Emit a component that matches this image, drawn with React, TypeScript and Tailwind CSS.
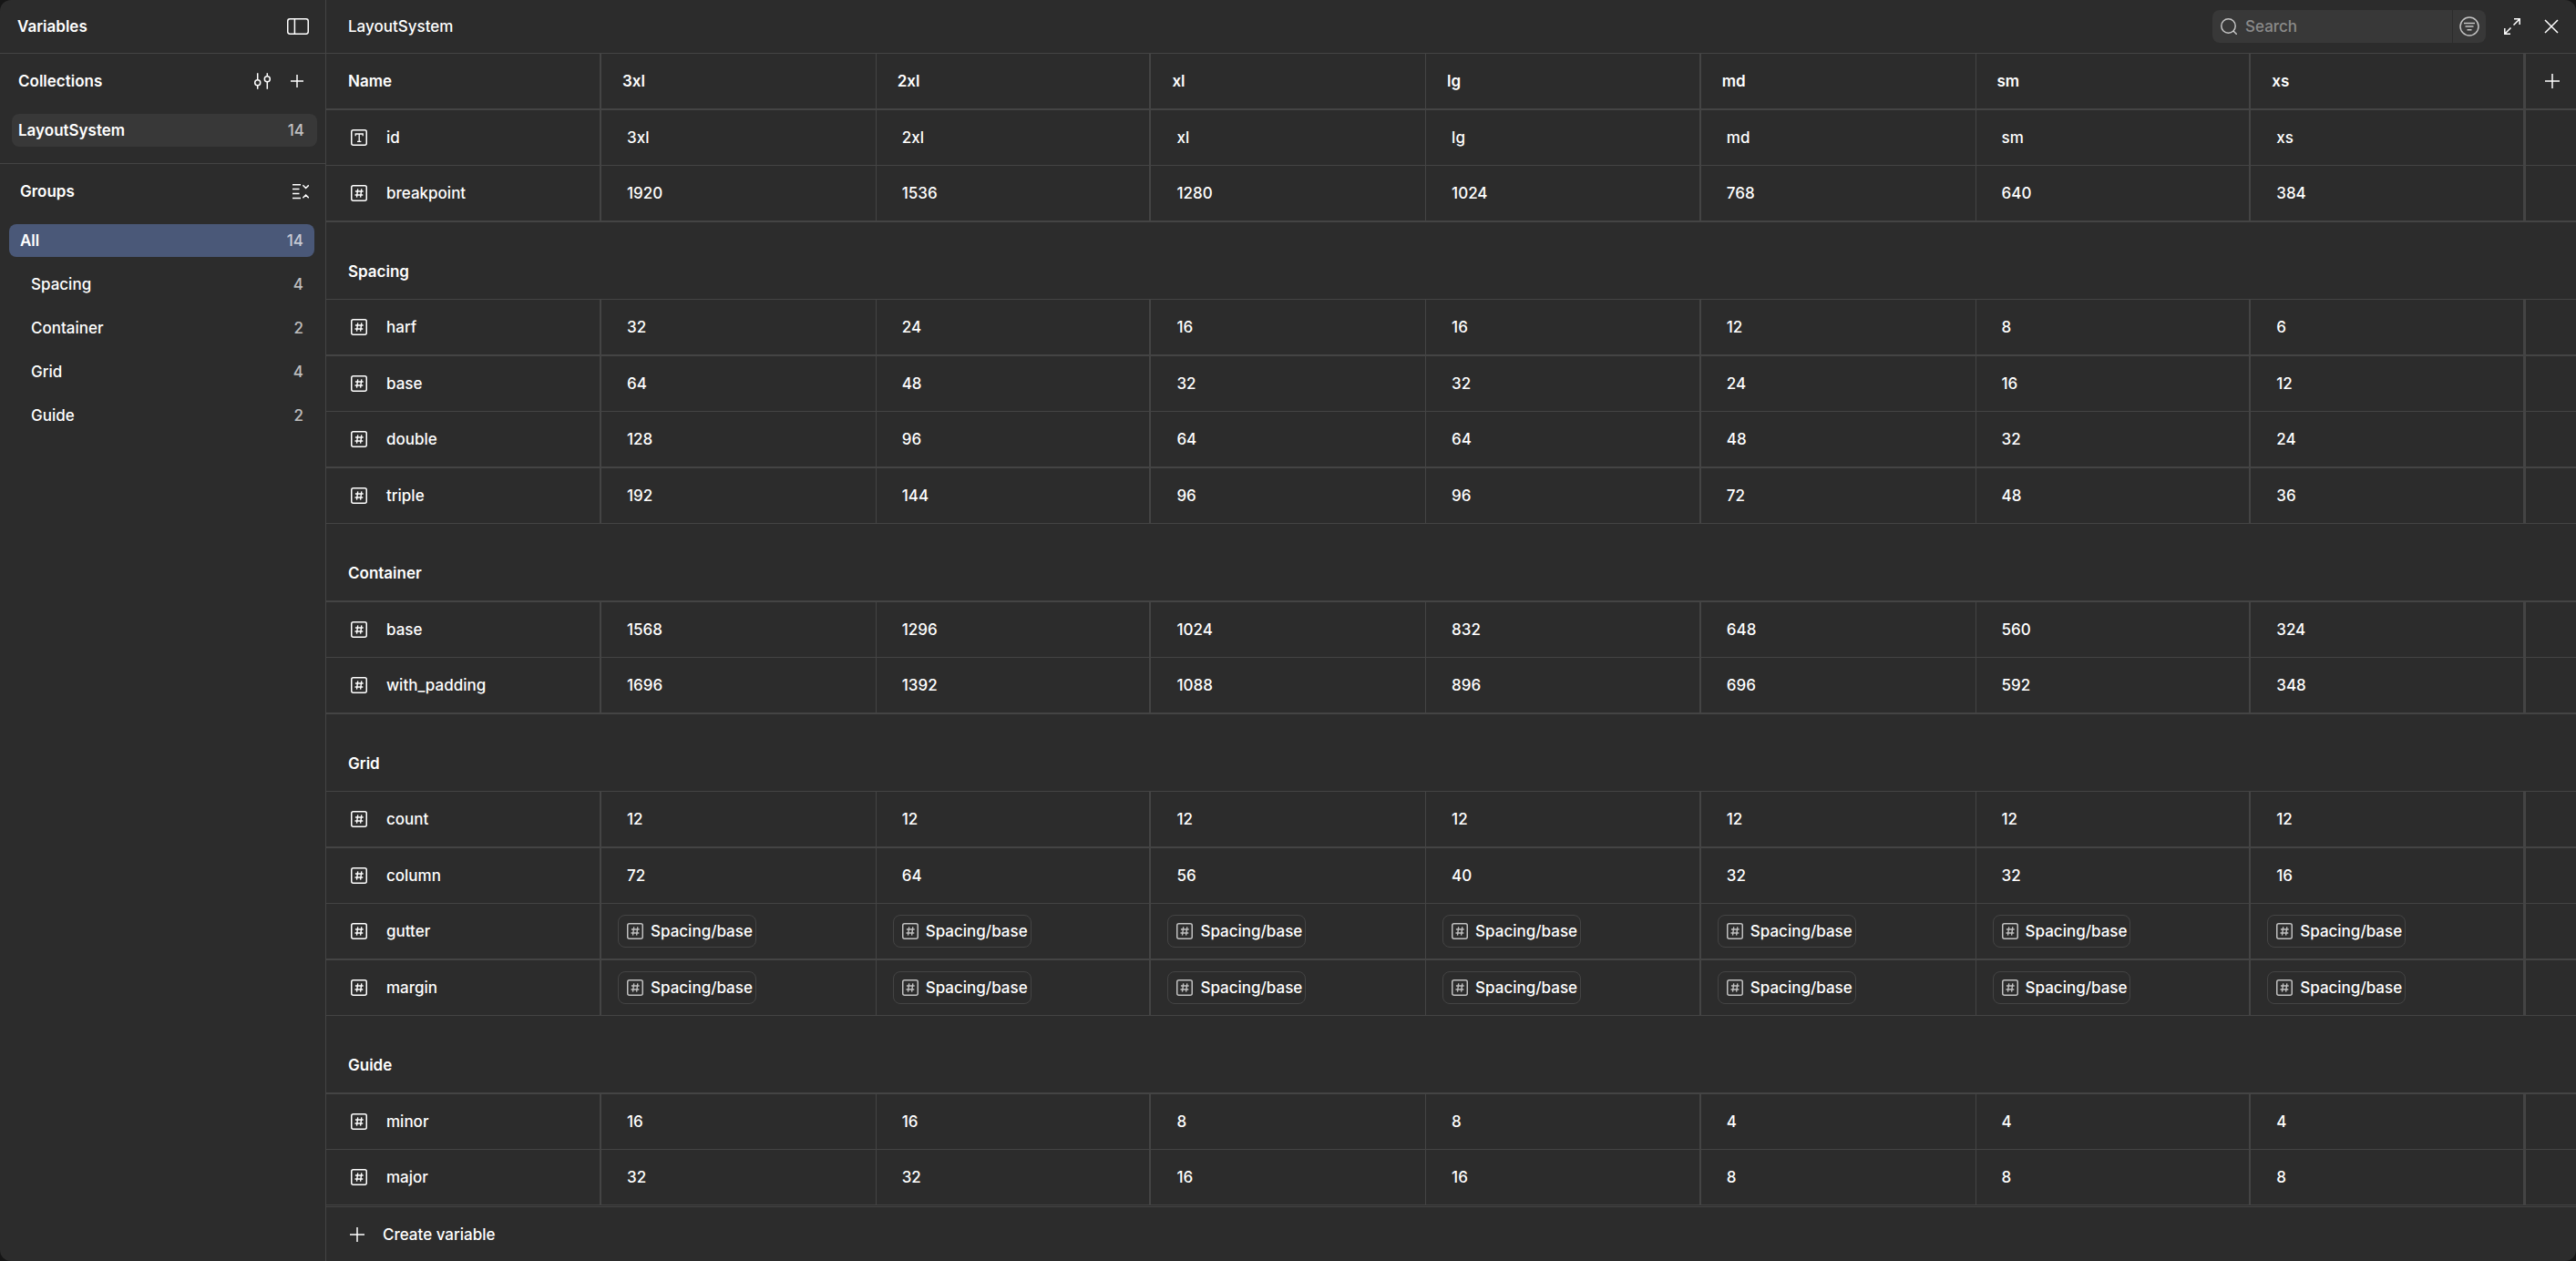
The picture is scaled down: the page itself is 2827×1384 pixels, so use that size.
import type { ReactNode } from 'react'

const MODES = ['3xl', '2xl', 'xl', 'lg', 'md', 'sm', 'xs']

interface Variable {
  name: string
  type?: 'string' | 'number'
  values?: (string | number)[]
  alias?: string
  thin?: boolean
}

interface VariableGroup {
  name: string
  thin?: boolean
  variables: Variable[]
}

const ROOT_VARIABLES: Variable[] = [
  { name: 'id', type: 'string', values: MODES, thin: true },
  { name: 'breakpoint', values: [1920, 1536, 1280, 1024, 768, 640, 384] },
]

const GROUPS: VariableGroup[] = [
  {
    name: 'Spacing',
    thin: true,
    variables: [
      { name: 'harf', values: [32, 24, 16, 16, 12, 8, 6] },
      { name: 'base', values: [64, 48, 32, 32, 24, 16, 12], thin: true },
      { name: 'double', values: [128, 96, 64, 64, 48, 32, 24] },
      { name: 'triple', values: [192, 144, 96, 96, 72, 48, 36], thin: true },
    ],
  },
  {
    name: 'Container',
    variables: [
      { name: 'base', values: [1568, 1296, 1024, 832, 648, 560, 324], thin: true },
      { name: 'with_padding', values: [1696, 1392, 1088, 896, 696, 592, 348] },
    ],
  },
  {
    name: 'Grid',
    thin: true,
    variables: [
      { name: 'count', values: [12, 12, 12, 12, 12, 12, 12] },
      { name: 'column', values: [72, 64, 56, 40, 32, 32, 16], thin: true },
      { name: 'gutter', alias: 'Spacing/base' },
      { name: 'margin', alias: 'Spacing/base', thin: true },
    ],
  },
  {
    name: 'Guide',
    variables: [
      { name: 'minor', values: [16, 16, 8, 8, 4, 4, 4], thin: true },
      { name: 'major', values: [32, 32, 16, 16, 8, 8, 8], thin: true },
    ],
  },
]

function Icon({ size = 18, children }: { size?: number; children: ReactNode }) {
  return (
    <svg
      width={size}
      height={size}
      viewBox={`0 0 ${size} ${size}`}
      fill="none"
      stroke="currentColor"
      strokeWidth={1.5}
      className="shrink-0"
      aria-hidden="true"
    >
      {children}
    </svg>
  )
}

function NumberIcon() {
  return (
    <Icon>
      <rect x="0.75" y="0.75" width="16.5" height="16.5" rx="2" />
      <path d="M7.7 4.4L6.5 13.6M11.8 4.4L10.6 13.6M4.9 7H13.7M4.5 11H13.3" strokeWidth={1.4} />
    </Icon>
  )
}

function StringIcon() {
  return (
    <Icon>
      <rect x="0.75" y="0.75" width="16.5" height="16.5" rx="2" />
      <path d="M5.2 7.2V5H13.2V7.2M9.2 5V13.3M7 13.3H11.4" strokeWidth={1.3} />
    </Icon>
  )
}

function PlusIcon({ size = 16 }: { size?: 14 | 16 }) {
  const middle = size / 2
  return (
    <Icon size={size}>
      <path d={`M${middle} 0V${size}M0 ${middle}H${size}`} />
    </Icon>
  )
}

function PanelIcon() {
  return (
    <Icon size={24}>
      <rect x="0.75" y="3.75" width="22.5" height="16.5" rx="2.4" />
      <path d="M8.4 4V20" />
    </Icon>
  )
}

function SettingsIcon() {
  return (
    <Icon>
      <circle cx="3.7" cy="10.8" r="3" />
      <circle cx="14.3" cy="6.7" r="3" />
      <path d="M3.7 0.3V7.8M3.7 13.8V17.7M14.3 0.3V3.7M14.3 9.7V17.7" />
    </Icon>
  )
}

function CollapseIcon() {
  return (
    <Icon>
      <path d="M0 1.7H9M0 6.6H7.5M0 11.6H7.5M0 16.4H9M11.4 2.3L14.6 5.5L17.8 2.3M11.4 16.2L14.6 13L17.8 16.2" />
    </Icon>
  )
}

function SearchIcon() {
  return (
    <Icon>
      <circle cx="8.5" cy="8.5" r="7.7" />
      <path d="M14 14L17.8 17.8" />
    </Icon>
  )
}

function FilterIcon() {
  return (
    <Icon size={22}>
      <circle cx="11" cy="11" r="10" />
      <path d="M5 7.5H17M6.5 11H15.5M8.5 14.7H13.5" />
    </Icon>
  )
}

function ExpandIcon() {
  return (
    <Icon>
      <path d="M11 0.8H17.2V7M17 1L10.5 7.5M0.8 11V17.2H7M1 17L7.5 10.5" />
    </Icon>
  )
}

function CloseIcon() {
  return (
    <Icon size={16}>
      <path d="M1 1L15 15M15 1L1 15" />
    </Icon>
  )
}

function IconButton({ label, children }: { label: string; children: ReactNode }) {
  return (
    <button type="button" aria-label={label} className="flex items-center justify-center">
      {children}
    </button>
  )
}

function GroupLink({ name, count }: { name: string; count: number }) {
  return (
    <li>
      <a href="#" className="flex h-9 items-center justify-between pl-6 pr-3">
        <span>{name}</span>
        <span className="text-white/70">{count}</span>
      </a>
    </li>
  )
}

function Sidebar() {
  return (
    <aside className="flex w-[358px] shrink-0 flex-col border-r border-[#444444]">
      <header className="flex h-[59px] items-center justify-between border-b border-[#444444] pl-[19px] pr-[18px]">
        <h1 className="font-semibold">Variables</h1>
        <IconButton label="Toggle sidebar">
          <PanelIcon />
        </IconButton>
      </header>

      <section className="h-[121px] border-b border-[#444444] pl-[13px] pr-[9px]">
        <div className="flex h-[60px] items-center justify-between pl-[7px] pr-[15px]">
          <h2 className="font-semibold">Collections</h2>
          <div className="flex items-center gap-[22px]">
            <IconButton label="Collection settings">
              <SettingsIcon />
            </IconButton>
            <IconButton label="Create collection">
              <PlusIcon size={14} />
            </IconButton>
          </div>
        </div>
        <a
          href="#"
          className="mt-1.5 flex h-9 items-center justify-between rounded-lg bg-[#383838] pl-[7px] pr-3.5"
        >
          <span className="font-semibold">LayoutSystem</span>
          <span className="text-white/70">14</span>
        </a>
      </section>

      <section className="pl-2.5 pr-3">
        <div className="flex h-[60px] items-center justify-between pl-3 pr-1.5">
          <h2 className="font-semibold">Groups</h2>
          <IconButton label="Collapse groups">
            <CollapseIcon />
          </IconButton>
        </div>
        <ul className="mt-1.5 flex flex-col gap-3">
          <li>
            <a
              href="#"
              aria-current="true"
              className="flex h-9 items-center justify-between rounded-lg bg-[#4a5878] px-3"
            >
              <span className="font-semibold">All</span>
              <span className="text-white/70">14</span>
            </a>
          </li>
          {GROUPS.map((group) => (
            <GroupLink key={group.name} name={group.name} count={group.variables.length} />
          ))}
        </ul>
      </section>
    </aside>
  )
}

function Toolbar() {
  return (
    <header className="flex h-[59px] items-center justify-between border-b border-[#444444] pl-6 pr-[19px]">
      <h2>LayoutSystem</h2>
      <div className="flex items-center">
        <div className="flex h-9 gap-px">
          <label className="flex w-[263px] items-center gap-[9px] rounded-l-lg bg-[#383838] pl-[9px] text-white/70">
            <SearchIcon />
            <input
              type="search"
              placeholder="Search"
              aria-label="Search"
              className="w-full min-w-0 bg-transparent outline-none placeholder:text-[#8a8a8a]"
            />
          </label>
          <button
            type="button"
            aria-label="Filter"
            className="flex w-9 items-center justify-center rounded-r-lg bg-[#383838] text-white/70"
          >
            <FilterIcon />
          </button>
        </div>
        <div className="ml-5 flex items-center gap-[26px]">
          <IconButton label="Expand">
            <ExpandIcon />
          </IconButton>
          <IconButton label="Close">
            <CloseIcon />
          </IconButton>
        </div>
      </div>
    </header>
  )
}

function AliasChip({ name }: { name: string }) {
  return (
    <button
      type="button"
      className="flex h-9 items-center gap-2 rounded-lg border border-[#444444] pl-[9px] pr-[3px]"
    >
      <span className="text-white/70">
        <NumberIcon />
      </span>
      {name}
    </button>
  )
}

function VariableRow({ variable }: { variable: Variable }) {
  const line = variable.thin ? 'h-[61px] border-b' : 'h-[62px] border-b-2'

  return (
    <tr>
      <th
        scope="row"
        className={`${line} border-r-2 border-[#444444] p-0 pl-[27px] text-left font-[450]`}
      >
        <div className="flex items-center gap-[21px]">
          {variable.type === 'string' ? <StringIcon /> : <NumberIcon />}
          {variable.name}
        </div>
      </th>
      {MODES.map((mode, i) => (
        <td
          key={mode}
          className={`${line} border-[#444444] p-0 pl-[18px] odd:border-r-2 even:border-r nth-[8]:border-r-3`}
        >
          {variable.alias ? (
            <AliasChip name={variable.alias} />
          ) : (
            <span className="pl-2.5">{variable.values?.[i]}</span>
          )}
        </td>
      ))}
      <td className={`${line} border-[#444444] p-0`} />
    </tr>
  )
}

function GroupHeading({ name, thin }: { name: string; thin?: boolean }) {
  return (
    <tr>
      <th
        scope="rowgroup"
        colSpan={MODES.length + 2}
        className={`${thin ? 'h-[85px] border-b' : 'h-[86px] border-b-2'} border-[#444444] p-0 pl-6 pt-6 text-left font-semibold`}
      >
        {name}
      </th>
    </tr>
  )
}

function VariablesTable() {
  return (
    <table className="w-full table-fixed border-separate border-spacing-0">
      <colgroup>
        <col className="w-[302px]" />
        {MODES.map((mode) => (
          <col key={mode} />
        ))}
        <col className="w-[55px]" />
      </colgroup>
      <thead>
        <tr>
          <th
            scope="col"
            className="h-[62px] border-b-2 border-r-2 border-[#444444] p-0 pl-6 text-left font-semibold"
          >
            Name
          </th>
          {MODES.map((mode) => (
            <th
              key={mode}
              scope="col"
              className="border-b-2 border-[#444444] p-0 pl-[23px] text-left font-semibold odd:border-r-2 even:border-r nth-[8]:border-r-3"
            >
              {mode}
            </th>
          ))}
          <td className="border-b-2 border-[#444444] p-0 pl-[21px]">
            <IconButton label="Create mode">
              <PlusIcon />
            </IconButton>
          </td>
        </tr>
      </thead>
      <tbody>
        {ROOT_VARIABLES.map((variable) => (
          <VariableRow key={variable.name} variable={variable} />
        ))}
      </tbody>
      {GROUPS.map((group) => (
        <tbody key={group.name}>
          <GroupHeading name={group.name} thin={group.thin} />
          {group.variables.map((variable) => (
            <VariableRow key={variable.name} variable={variable} />
          ))}
        </tbody>
      ))}
    </table>
  )
}

export default function App() {
  return (
    <div className="min-h-screen bg-[#161616]">
      <div className="flex min-h-screen rounded-xl bg-[#2c2c2c] font-['Inter',sans-serif] text-[17px] font-[450] leading-6 text-white">
        <Sidebar />
        <main className="flex min-w-0 flex-1 flex-col">
          <Toolbar />
          <VariablesTable />
          <footer className="mt-px flex h-[60px] items-center border-t border-[#444444] pl-[26px]">
            <button type="button" className="flex items-center gap-5">
              <PlusIcon />
              Create variable
            </button>
          </footer>
        </main>
      </div>
    </div>
  )
}
